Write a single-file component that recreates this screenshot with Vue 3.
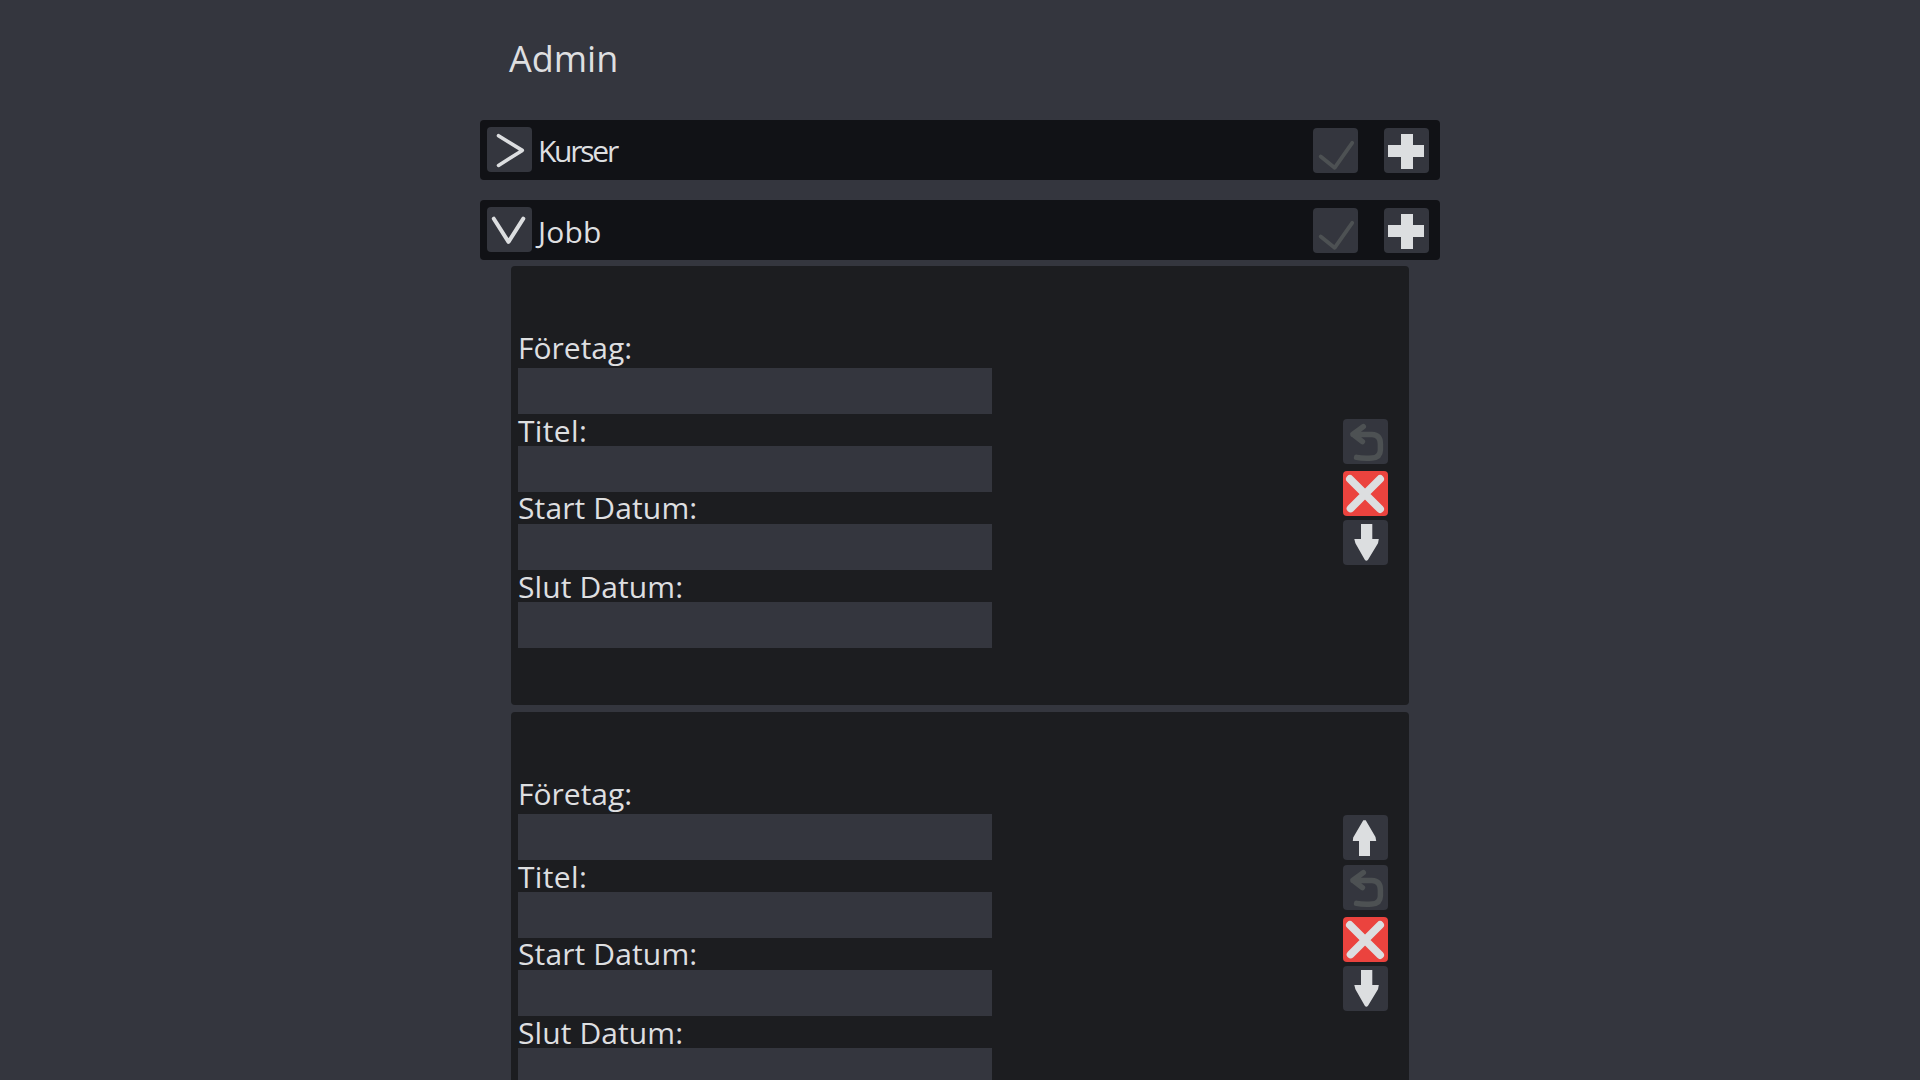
<script setup>
import { h } from 'vue'

const stroke = (d, width, color = '#dcdee0') =>
  h('path', { d, fill: 'none', stroke: color, 'stroke-width': width, 'stroke-linecap': 'round', 'stroke-linejoin': 'round' })
const solid = (d) => h('path', { d, fill: '#dcdee0' })

const icons = {
  closed: () => stroke('M11.5 8.7L35.3 23.4L11.5 38.4', 3.6),
  open: () => stroke('M6.8 11.7L21.5 34.9L36.3 11.7', 4),
  check: () => stroke('M7.7 28.5L21.6 39.8L39.2 14.8', 3.8, '#4d5153'),
  plus: () => solid('M17 6H29V17H40V29H29V41H17V29H4V17H17Z'),
  undo: () => stroke('M20.3 7.6L10 15.3L19.4 22.6M10 15.5H29Q37.4 15.8 37.4 25V31Q37.2 38.6 29 39Q20 39.6 13.6 38.4', 5.5, '#4d5153'),
  remove: () => stroke('M6.9 7.9L37.1 38.1M37.1 7.9L7.6 37.4', 7.8),
  down: () => solid('M18 4H29.3V19H35.8L35 23.3L25 39.8Q23.3 41.5 21.8 39.8L12.4 23.3L11.3 19H18Z'),
  up: () => solid('M20.3 5.2H22.7L32.5 22L33.2 26H27V41H16V26H9.8L10.2 22.5Z'),
}

const Icon = (props) => h('svg', { width: 45, height: 45, viewBox: '0 0 45 45' }, [icons[props.name]()])
Icon.props = ['name']

const sections = [
  { title: 'Kurser', key: 'kurser', icon: 'closed', items: [] },
  {
    title: 'Jobb',
    key: 'jobb',
    icon: 'open',
    items: [
      ['undo', 'remove', 'down'],
      ['up', 'undo', 'remove', 'down'],
    ],
  },
]
const fields = ['Företag:', 'Titel:', 'Start Datum:', 'Slut Datum:']
</script>

<template>
  <main class="page">
    <h1>Admin</h1>
    <section v-for="s in sections" :key="s.key" class="section">
      <header class="bar">
        <button class="btn toggle"><Icon :name="s.icon" /></button>
        <h2 :class="s.key">{{ s.title }}</h2>
        <button class="btn save"><Icon name="check" /></button>
        <button class="btn"><Icon name="plus" /></button>
      </header>
      <article v-for="(actions, i) in s.items" :key="i" class="card">
        <div class="fields">
          <label v-for="(f, n) in fields" :key="f" :class="['field', 'f' + n]">
            <span>{{ f }}</span>
            <input type="text" />
          </label>
        </div>
        <div :class="['actions', { movable: actions.includes('up') }]">
          <button v-for="a in actions" :key="a" :class="['btn', a]"><Icon :name="a" /></button>
        </div>
      </article>
    </section>
  </main>
</template>

<style>
html, body {
  background: #34363e;
  overflow: hidden;
}
</style>

<style scoped>
.page {
  box-sizing: border-box;
  width: 960px;
  height: 1080px;
  margin: 0 auto;
  overflow: hidden;
  color: #dedfe0;
  font-family: "Open Sans", sans-serif;
}
h1 {
  height: 120px;
  margin: 0;
  padding-left: 29px;
  box-sizing: border-box;
  font-size: 36px;
  font-weight: 400;
  line-height: 118px;
}
.section { margin-bottom: 20px; }
.bar {
  display: flex;
  align-items: center;
  height: 60px;
  box-sizing: border-box;
  padding: 0 11px 0 7px;
  margin-bottom: 6px;
  border-radius: 4px;
  background: #111216;
}
.section:first-of-type .bar { margin-bottom: 0; }
.btn {
  flex: none;
  width: 45px;
  height: 45px;
  padding: 0;
  border: 0;
  border-radius: 4px;
  background: #34363e;
  margin-top: 1px;
}
.btn svg { display: block; }
.toggle { margin-top: -1px; }
.save { margin-right: 26px; }
h2 {
  flex: 1;
  margin: 0;
  padding: 3px 0 0 6px;
  font-size: 30px;
  font-weight: 400;
  line-height: 40px;
}
.kurser {
  padding-top: 1px;
  letter-spacing: -2.25px;
}
.jobb { letter-spacing: 0.2px; }
.card {
  display: flex;
  justify-content: space-between;
  align-items: center;
  box-sizing: border-box;
  width: 898px;
  height: 439px;
  margin: 0 auto 7px;
  padding: 0 21px 0 7px;
  border-radius: 4px;
  background: #1c1d20;
}
.fields {
  width: 474px;
  padding-top: 7px;
}
.field { display: block; }
.field span {
  display: block;
  height: 32px;
  font-size: 30px;
  line-height: 34px;
}
.f0 span { height: 37px; }
.f1 span { letter-spacing: 0.35px; }
.f2 span { line-height: 32px; letter-spacing: 0.13px; }
.f3 span { letter-spacing: 0.1px; }
.field input {
  display: block;
  box-sizing: border-box;
  width: 474px;
  height: 46px;
  padding: 0;
  border: 0;
  background: #34363e;
}
.actions {
  display: flex;
  flex-direction: column;
  padding-top: 13px;
}
.actions.movable { padding: 0 0 37px; }
.actions .btn { margin: 0; }
.actions .up { margin-bottom: 5px; }
.actions .undo { margin-bottom: 7px; }
.actions .remove { margin-bottom: 4px; background: #eb433e; }
</style>
